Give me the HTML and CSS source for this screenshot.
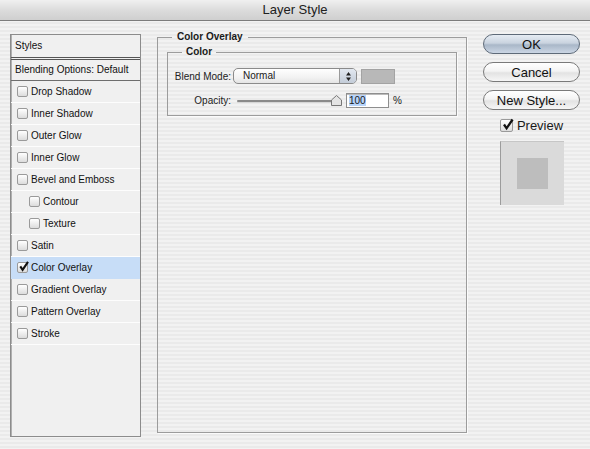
FILE: index.html
```html
<!DOCTYPE html>
<html lang="en">
<head>
<meta charset="UTF-8">
<title>Layer Style</title>
<link rel="stylesheet" href="styles.css">
</head>
<body>
<div class="window">
<div class="titlebar">Layer Style</div>

<div class="content">
<!-- list of effects -->
<div class="styles-list">
<div class="list-head">Styles</div>
<div class="list-blend">Blending Options: Default</div>
<div class="list-item"><span class="check"></span>Drop Shadow</div>
<div class="list-item"><span class="check"></span>Inner Shadow</div>
<div class="list-item"><span class="check"></span>Outer Glow</div>
<div class="list-item"><span class="check"></span>Inner Glow</div>
<div class="list-item"><span class="check"></span>Bevel and Emboss</div>
<div class="list-item sub"><span class="check"></span>Contour</div>
<div class="list-item sub"><span class="check"></span>Texture</div>
<div class="list-item"><span class="check"></span>Satin</div>
<div class="list-item active"><span class="check checked"><svg viewBox="0 0 11 11" width="11" height="11"><path d="M2.3 5.3 L4.6 8.8 L10 0.8" fill="none" stroke="#111" stroke-width="2.1"/></svg></span>Color Overlay</div>
<div class="list-item"><span class="check"></span>Gradient Overlay</div>
<div class="list-item"><span class="check"></span>Pattern Overlay</div>
<div class="list-item"><span class="check"></span>Stroke</div>
</div>

<!-- settings -->
<fieldset class="group">
<legend>Color Overlay</legend>
<fieldset class="subgroup">
<legend>Color</legend>
<div class="row">
<label class="row-label">Blend Mode:</label>
<div class="select">
<span class="select-value">Normal</span>
<span class="select-arrows"><svg viewBox="0 0 7 11" width="7" height="11"><path d="M3.5 1 L6 4.5 L1 4.5 Z M3.5 10 L6 6.5 L1 6.5 Z" fill="#222"/></svg></span>
</div>
<div class="swatch"></div>
</div>
<div class="row row-opacity">
<label class="row-label">Opacity:</label>
<div class="slider">
<div class="track"></div>
<svg class="thumb" viewBox="0 0 11 11" width="11" height="11"><path d="M5.5 0.5 L10.5 5 L10.5 10.5 L0.5 10.5 L0.5 5 Z" fill="#e4e4e4" stroke="#777"/></svg>
</div>
<div class="num-input"><span class="selected">100</span></div>
<span class="unit">%</span>
</div>
</fieldset>
</fieldset>

<!-- buttons and preview -->
<div class="actions">
<button class="btn default">OK</button>
<button class="btn">Cancel</button>
<button class="btn">New Style...</button>
<div class="preview-toggle">
<span class="check big checked"><svg viewBox="0 0 13 13" width="13" height="13"><path d="M3 6.5 L5.6 10.3 L11.6 1.5" fill="none" stroke="#111" stroke-width="2.3"/></svg></span>Preview
</div>
<div class="preview-box"><div class="preview-swatch"></div></div>
</div>
</div>
</div>
</body>
</html>
```

FILE: styles.css
```css
body {
margin: 0;
font-family: 'Liberation Sans', Arial, sans-serif;
color: #1a1a1a;
}

.window {
width: 590px;
height: 449px;
background: repeating-linear-gradient(#f2f2f2 0 2px, #eaeaea 2px 4px);
overflow: hidden;
}

.titlebar {
height: 20px;
line-height: 20px;
text-align: center;
font-size: 13px;
color: #202020;
background: linear-gradient(#f0f0f0, #dcdcdc 50%, #cfcfcf);
border-bottom: 1px solid #7c7c7c;
}

.content {
display: flex;
align-items: flex-start;
padding-top: 10px;
}

/* left list */
.styles-list {
margin: 3px 0 0 10px;
width: 129px;
height: 401px;
border: 1px solid #8c8c8c;
box-shadow: inset 1px 0 0 #b0b0b0;
background: #f0f0f0;
font-size: 10px;
color: #111;
}

.list-head {
height: 22px;
line-height: 21px;
padding-left: 4px;
border-bottom: 3px double #555;
}

.list-blend {
height: 20px;
line-height: 20px;
padding-left: 4px;
border-bottom: 1px solid #6e6e6e;
}

.list-item {
height: 21px;
display: flex;
align-items: center;
padding-left: 6px;
border-bottom: 1px solid #fdfdfd;
}

.list-item.sub {
padding-left: 18px;
}

.list-item.active {
background: #c7ddf7;
border-bottom-color: #c7ddf7;
}

.check {
width: 9px;
height: 9px;
margin-right: 3px;
border: 1px solid #9a9a9a;
border-radius: 2px;
background: linear-gradient(#ffffff, #dcdcdc);
position: relative;
flex: none;
}

.check svg {
position: absolute;
left: 0;
top: -2px;
}

.check.big {
width: 11px;
height: 11px;
margin-right: 4px;
}

/* main group */
.group {
margin: 0 0 0 16px;
padding: 0 9px;
width: 290px;
height: 400px;
border: 1px solid #9c9c9c;
box-shadow: 1px 1px 0 #fbfbfb;
}

.group legend,
.subgroup legend {
font-size: 10px;
font-weight: bold;
line-height: 12px;
padding: 0 5px;
margin-left: 5px;
}

.subgroup {
margin: 3px 0 0 0;
padding: 10px 0 8px 0;
border: 1px solid #9c9c9c;
box-shadow: 1px 1px 0 #fbfbfb;
font-size: 10px;
}

.subgroup legend {
margin-left: 14px;
padding: 0 4px;
}

.row {
display: flex;
align-items: center;
height: 16px;
}

.row-opacity {
margin-top: 9px;
height: 14px;
}

.row-label {
flex: none;
width: 58px;
margin-left: 5px;
text-align: right;
white-space: nowrap;
color: #222;
}

.select {
flex: none;
margin-left: 2px;
width: 122px;
height: 14px;
border: 1px solid #8a8a8a;
border-radius: 5px;
background: linear-gradient(#ffffff, #f2f2f2 60%, #e4e4e4);
display: flex;
overflow: hidden;
}

.select-value {
flex: 1;
padding-left: 9px;
line-height: 14px;
}

.select-arrows {
width: 16px;
border-left: 1px solid #9a9a9a;
background: linear-gradient(#e2e8f0, #c3ccd8);
display: flex;
align-items: center;
justify-content: center;
}

.swatch {
flex: none;
margin-left: 4px;
width: 32px;
height: 13px;
background: #b8b8b8;
border: 1px solid #a3a3a3;
}

.slider {
flex: none;
margin-left: 6px;
width: 106px;
height: 11px;
position: relative;
}

.track {
position: absolute;
left: 0;
right: 6px;
top: 5px;
height: 2px;
border-radius: 2px;
background: #8a8a8a;
box-shadow: 0 1px 0 #d6d6d6;
}

.thumb {
position: absolute;
right: 1px;
top: 0;
}

.num-input {
flex: none;
margin-left: 3px;
width: 39px;
height: 13px;
background: #fff;
border: 1px solid #8e8e8e;
box-shadow: inset 0 1px 0 #bbb;
line-height: 13px;
padding-left: 2px;
}

.selected {
background: #b6d4fb;
}

.unit {
margin-left: 4px;
}

/* right column */
.actions {
margin: 3px 0 0 16px;
width: 97px;
display: flex;
flex-direction: column;
align-items: center;
}

.btn {
width: 97px;
height: 20px;
margin-bottom: 8px;
padding: 0;
font-family: 'Liberation Sans', Arial, sans-serif;
font-size: 13px;
color: #111;
border: 1px solid #7a7a7a;
border-radius: 10px;
background: linear-gradient(#ffffff, #f4f4f4 45%, #e3e3e3 55%, #f6f6f6);
}

.btn.default {
border-color: #5e6a78;
background: linear-gradient(#e6ecf3, #c9d3df 45%, #a9b7c8 55%, #cbd6e4);
}

.preview-toggle {
display: flex;
align-items: center;
font-size: 13px;
margin-top: 0;
}

.preview-box {
margin-top: 8px;
width: 63px;
height: 63px;
background: #dadada;
border-left: 1px solid #9c9c9c;
border-top: 1px solid #c6c6c6;
display: flex;
align-items: center;
justify-content: center;
}

.preview-swatch {
width: 31px;
height: 31px;
background: #bdbdbd;
}
```
